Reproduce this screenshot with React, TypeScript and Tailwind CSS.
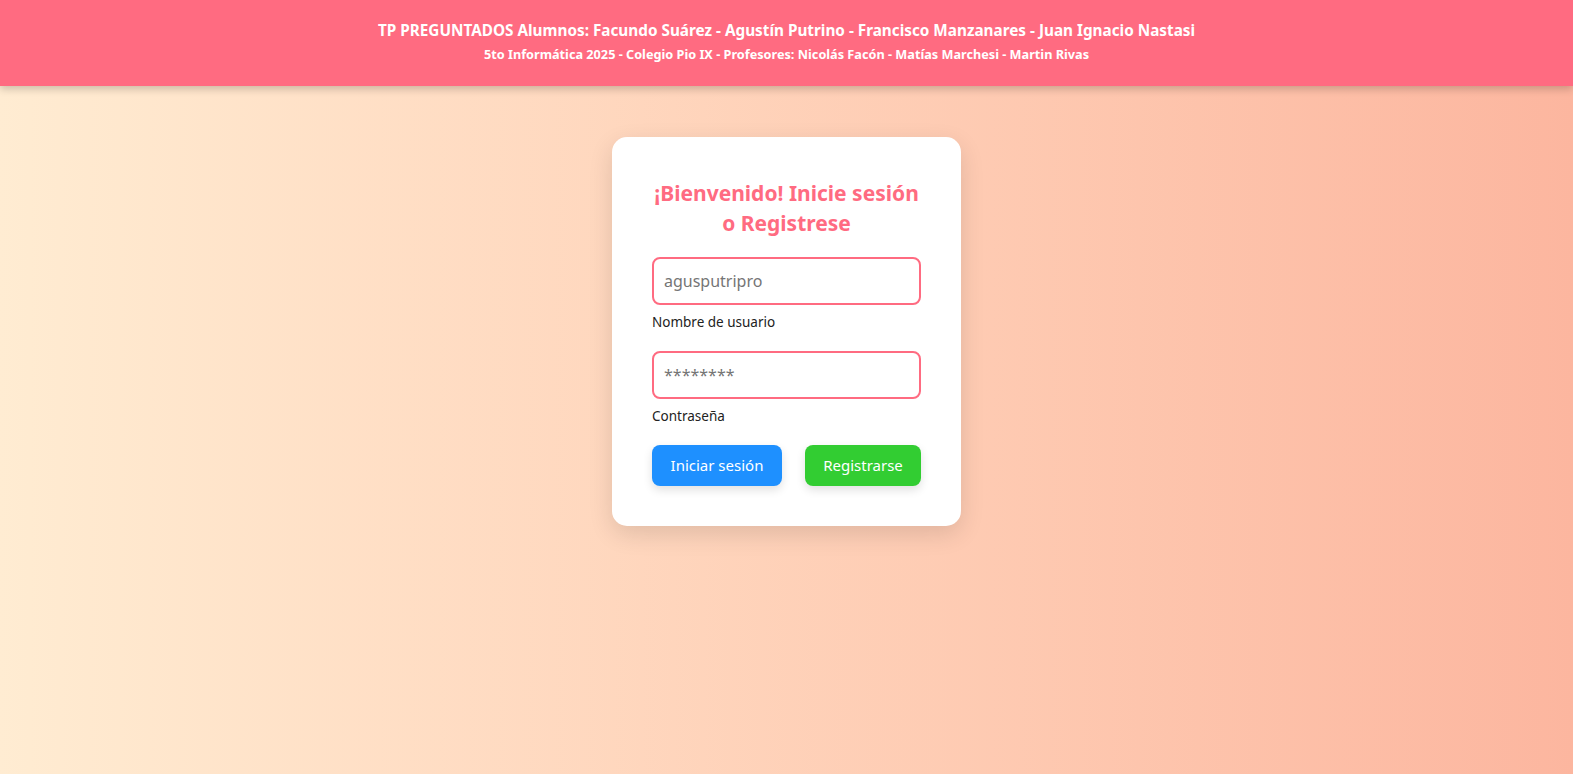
export default function App() {
  return (
    <div
      className="min-h-screen bg-gradient-to-r from-[#ffecd2] to-[#fcb69f] text-[#333]"
      style={{ fontFamily: '"Noto Sans", "Open Sans", sans-serif' }}
    >
      <header className="flex h-[86px] flex-col items-center bg-[#ff6b81] pt-[19px] text-white shadow-[0_3px_8px_rgba(0,0,0,0.2)]">
        <h1 className="text-[15.3px] font-bold leading-[22px]">
          TP PREGUNTADOS Alumnos: Facundo Suárez - Agustín Putrino - Francisco Manzanares - Juan Ignacio Nastasi
        </h1>
        <p className="mt-[4px] text-[12.7px] font-bold leading-[18px]">
          5to Informática 2025 - Colegio Pio IX - Profesores: Nicolás Facón - Matías Marchesi - Martin Rivas
        </p>
      </header>

      <main className="flex justify-center pt-[51px]">
        <form className="w-[349px] rounded-[15px] bg-white px-10 pb-10 pt-[41px] shadow-[0_8px_24px_rgba(0,0,0,0.12)]">
          <h2 className="text-center text-[21px] font-bold leading-[30px] text-[#ff6b81]">
            ¡Bienvenido! Inicie sesión o Registrese
          </h2>

          <div className="mt-[19px]">
            <input
              type="text"
              placeholder="agusputripro"
              className="h-[48px] w-full rounded-lg border-2 border-[#ff6b81] px-[10px] text-[16px] outline-none placeholder:text-[#757575]"
            />
            <label className="mt-[8px] block text-[13.5px] leading-[18px] text-[#222]">Nombre de usuario</label>
          </div>

          <div className="mt-[20px]">
            <input
              type="password"
              placeholder="********"
              className="h-[48px] w-full rounded-lg border-2 border-[#ff6b81] px-[10px] text-[16px] outline-none placeholder:text-[#757575]"
            />
            <label className="mt-[8px] block text-[13.5px] leading-[18px] text-[#222]">Contraseña</label>
          </div>

          <div className="mt-[20px] flex justify-between">
            <button
              type="button"
              className="h-[41px] w-[130px] rounded-lg bg-[#1e90ff] text-[15px] text-white shadow-[0_4px_10px_rgba(0,0,0,0.12)]"
            >
              Iniciar sesión
            </button>
            <button
              type="button"
              className="h-[41px] w-[116px] rounded-lg bg-[#32cd32] text-[15px] text-white shadow-[0_4px_10px_rgba(0,0,0,0.12)]"
            >
              Registrarse
            </button>
          </div>
        </form>
      </main>
    </div>
  );
}
